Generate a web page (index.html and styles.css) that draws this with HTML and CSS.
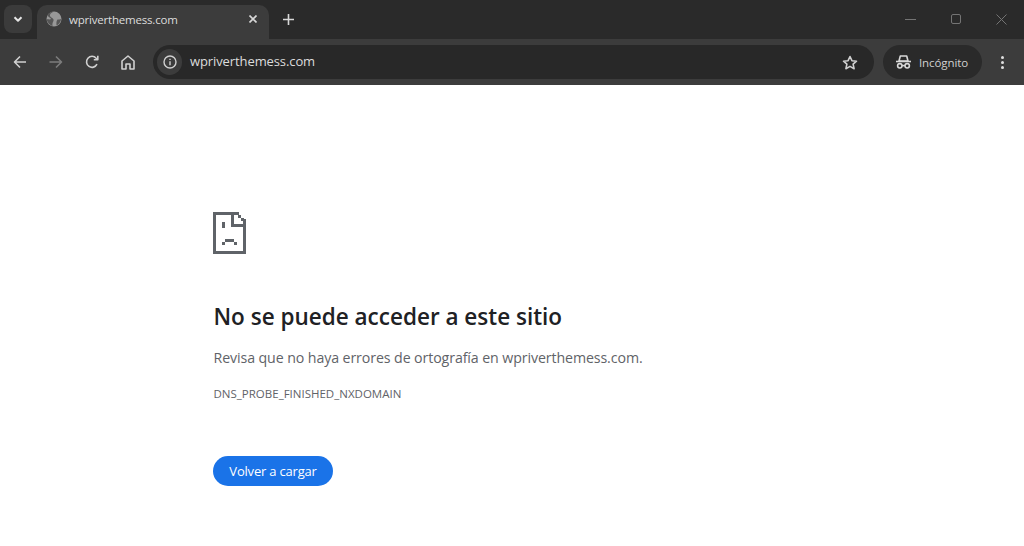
FILE: index.html
```html
<!DOCTYPE html>
<html lang="es">
<head>
<meta charset="utf-8">
<title>wpriverthemess.com</title>
<link rel="stylesheet" href="styles.css">
</head>
<body>
<div class="chrome">
  <div class="tabstrip">
    <div class="tabsearch">
      <svg width="12" height="12" viewBox="0 0 12 12"><path d="M2.5 4.300 6 7.800l3.500-3.500" class="st2"/></svg>
    </div>
    <div class="tab">
      <svg class="globe" width="16" height="16" viewBox="0 0 16 16"><circle cx="8" cy="8" r="7.500" fill="#989898"/><path d="M8 .5C5 2 3.500 3 4 5s3 1.500 3.500 3.500S6 11 6.500 15.300c-2-1-5-3-6-7C2 8 4 9 5 8 4 6 1.500 6 1.500 4 3 1.500 6 .5 8 .5ZM11.500 8.500c1 0 2.500 0 3.500-.5 0 2.500-2 5.500-4.500 6.500 0-2-.5-4 1-6Z" fill="#565656"/></svg>
      <span class="tabtitle">wpriverthemess.com</span>
      <svg width="8" height="8" viewBox="0 0 8 8"><path d="M.5.500l7 7M7.500.500l-7 7" class="st2w"/></svg>
    </div>
    <svg class="newtab" width="11" height="11" viewBox="0 0 11 11"><path d="M5.500 0v11M0 5.500h11" class="st2w"/></svg>
    <div class="windowctl">
      <svg width="11" height="11" viewBox="0 0 11 11"><path d="M0 5.500h11" class="st1"/></svg>
      <svg width="10" height="10" viewBox="0 0 10 10"><rect x=".5" y=".5" width="9" height="9" rx="1.500" class="st1"/></svg>
      <svg width="11" height="11" viewBox="0 0 11 11"><path d="M.5.500l10 10M10.500.500l-10 10" class="st1"/></svg>
    </div>
  </div>
  <div class="toolbar">
    <div class="navs">
      <svg width="14" height="14" viewBox="0 0 14 14"><path d="M13 7H1.500M7 1.500 1.500 7 7 12.500" class="st3"/></svg>
      <svg width="14" height="14" viewBox="0 0 14 14"><path d="M.5 7h12M7 1.500 12.500 7 7 12.500" class="st3 dim"/></svg>
      <svg width="14" height="14" viewBox="0 0 14 14"><path d="M12 9.200A5.500 5.500 0 1 1 11.200 3.200L12.800 4.800M12.800 .8v4h-4" class="st3"/></svg>
      <svg width="14" height="15" viewBox="0 0 14 15"><path d="M1 6 7 1l6 5v8H9V9H5v5H1Z" class="st3"/></svg>
    </div>
    <div class="omnibox">
      <span class="infobtn">
        <svg width="14" height="14" viewBox="0 0 14 14"><circle cx="7" cy="7" r="6" class="st1w"/><path d="M7 6.200v4M7 3.700v1.300" class="st1w"/></svg>
      </span>
      <span class="url">wpriverthemess.com</span>
      <svg class="star" width="16" height="15" viewBox="0 0 16 15"><path d="M8 1.500l1.900 4.200 4.600.5-3.400 3 1 4.500L8 11.400l-4.100 2.300 1-4.500-3.400-3 4.600-.5Z" class="st3"/></svg>
    </div>
    <div class="incognito">
      <svg width="15" height="14" viewBox="0 0 15 14"><path d="M3 6 4.300 1h6.400L12 6Z" class="st2w"/><path d="M0 6.500h15" class="st2w"/><circle cx="3.800" cy="10.800" r="2.200" class="st2w"/><circle cx="11.200" cy="10.800" r="2.200" class="st2w"/><path d="M6 10.600h3" class="st2w"/></svg>
      <span>Incógnito</span>
    </div>
    <div class="kebab"><i></i><i></i><i></i></div>
  </div>
</div>
<main class="page">
  <svg class="sadfile" width="33" height="42" viewBox="0 0 33 42" shape-rendering="crispEdges">
    <path d="M0 1.500h26M1.500 0v42M0 40.500h33M31.500 7v35M19.500 1v12.500h13" fill="none" stroke="#5f6368" stroke-width="3"/>
    <path d="M25 3h3v3h3v3h-3V6h-3ZM9 10h3v6H9ZM9 30h3v3H9ZM12 27h9v3h-9ZM21 30h3v3h-3Z" fill="#5f6368"/>
  </svg>
  <div class="copy">
    <h1 class="headline">No se puede acceder a este sitio</h1>
    <p class="message">Revisa que no haya errores de ortografía en wpriverthemess.com.</p>
    <p class="code">DNS_PROBE_FINISHED_NXDOMAIN</p>
  </div>
  <button class="reload">Volver a cargar</button>
</main>
</body>
</html>
```
FILE: styles.css
```css
* { box-sizing: border-box; }
html, body { margin: 0; height: 100%; }
body { background: #fff; font-family: "Open Sans", "Noto Sans", sans-serif; overflow: hidden; }
svg { display: block; flex: none; }
.st1, .st2, .st2w, .st3, .st1w { fill: none; stroke-linejoin: round; }
.st1 { stroke: #747474; stroke-width: 1; }
.st1w { stroke: #d0d0d0; stroke-width: 1.4; }
.st2 { stroke: #e6e6e6; stroke-width: 2; }
.st2w { stroke: #d8d8d8; stroke-width: 1.6; }
.st3 { stroke: #d0d0d0; stroke-width: 1.6; }
.dim { stroke: #7c7c7c; }

.tabstrip { height: 39px; background: #2a2a2a; display: flex; align-items: flex-end; padding-left: 4px; }
.tabsearch { width: 28px; height: 28px; margin-bottom: 6px; background: #3b3b3b; border-radius: 8px; display: flex; align-items: center; justify-content: center; }
.tab { width: 232px; height: 34px; margin-left: 5px; background: #3c3c3c; border-radius: 10px 10px 0 0; display: flex; align-items: center; padding: 0 12px 6px 9px; color: #dcdcdc; }
.tabtitle { flex: 1; font-size: 11.500px; margin-left: 7px; letter-spacing: -.2px; }
.newtab { margin: 0 0 14px 14px; }
.windowctl { margin-left: auto; padding-right: 17px; height: 100%; display: flex; align-items: center; gap: 35px; padding-bottom: 1px; }

.toolbar { height: 46px; background: #3c3c3c; display: flex; align-items: center; padding-left: 13px; }
.navs { display: flex; width: 133px; gap: 22px; align-items: center; }
.omnibox { width: 721px; height: 34px; margin-left: 7px; background: #282828; border-radius: 17px; display: flex; align-items: center; padding: 0 16px 0 0; color: #dcdcdc; }
.infobtn { width: 25px; height: 26px; margin-left: 4px; border-radius: 13px; background: #3c3c3c; display: flex; align-items: center; justify-content: center; }
.url { flex: 1; margin-left: 8px; padding-bottom: 2px; font-size: 13px; letter-spacing: -.1px; }
.incognito { width: 99px; height: 34px; margin-left: 9px; background: #2a2a2a; border-radius: 17px; display: flex; align-items: center; gap: 8px; padding-left: 13px; color: #d0d0d0; font-size: 11.500px; letter-spacing: -.1px; }
.kebab { margin-left: 19px; display: flex; flex-direction: column; gap: 2px; }
.kebab i { width: 3px; height: 3px; border-radius: 50%; background: #dedede; }

.page { padding: 127px 0 0 213px; }
.sadfile { margin-bottom: 48px; }
.copy { padding-left: .5px; }
.headline { margin: 0; font-size: 22.500px; line-height: 30px; font-weight: 600; color: #202124; letter-spacing: 0; }
.message { margin: 16px 0 0; font-size: 14.200px; line-height: 20px; color: #5f6368; letter-spacing: -.1px; }
.code { margin: 18px 0 0; font-size: 11.500px; line-height: 15px; color: #5f6368; letter-spacing: 0; }
.reload { display: block; margin-top: 55px; width: 120px; height: 30px; border: 0; border-radius: 15px; background: #1a73e8; color: #fff; font: 13px "Open Sans", sans-serif; letter-spacing: -.2px; padding: 0; }
```
